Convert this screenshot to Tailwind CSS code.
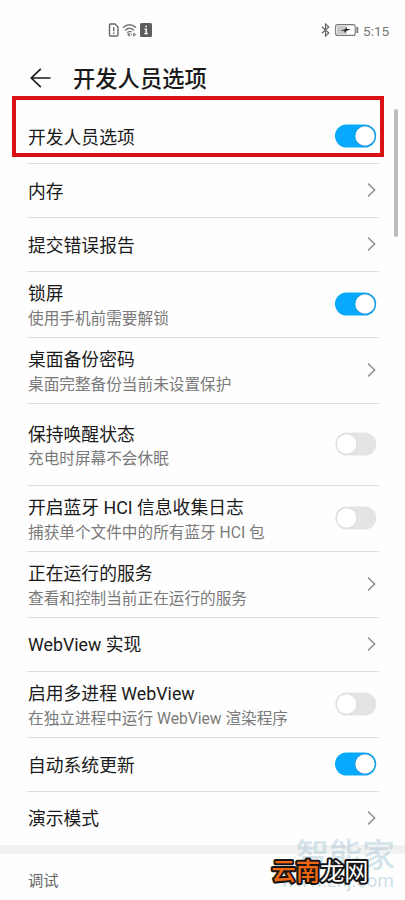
<!DOCTYPE html>
<html lang="zh-CN">
<head>
<meta charset="utf-8">
<title>开发人员选项</title>
<script src="https://cdn.jsdelivr.net/npm/@tailwindcss/browser@4"></script>
</head>
<body class="bg-[#fefefe] font-['Roboto','Noto_Sans_CJK_SC',sans-serif] text-[#1a1a1a]">
<svg class="hidden">
  <symbol id="chev" viewBox="0 0 9 16"><path d="M1 1.5 7.6 8 1 14.5" fill="none" stroke="#8c8c8c" stroke-width="1.5"/></symbol>
  <symbol id="on" viewBox="0 0 42 24"><rect x="0" y="0.5" width="41.2" height="23" rx="11.5" fill="#06a9fb"/><circle cx="30" cy="12" r="10.4" fill="#2b8fca"/><circle cx="30" cy="12" r="9.7" fill="#fff"/></symbol>
  <symbol id="off" viewBox="0 0 42 24"><rect x="0.3" y="0.5" width="41" height="23" rx="11.5" fill="#e4e4e4"/><circle cx="11.6" cy="12" r="10.5" fill="#dadada"/><circle cx="11.6" cy="12" r="9.8" fill="#fff"/></symbol>
</svg>
<div class="relative w-[405px] h-[900px] overflow-hidden flex flex-col">
  <header class="h-[60px] shrink-0 flex items-center justify-between pl-[108px] pr-[15px] text-[#777]">
    <div class="flex items-center gap-[3px]">
      <svg class="w-[11px] h-[14px]" viewBox="0 0 11 14" fill="none" stroke="#666" stroke-width="1.4"><path d="M1.5 2.2Q1.5 1 2.7 1H7L10 4v7.8Q10 13 8.8 13H2.7Q1.5 13 1.5 11.8Z"/><path d="M5.7 4.2v4M5.7 9.6v1.4"/></svg>
      <svg class="w-[15px] h-[14px]" viewBox="0 0 15 14" fill="none" stroke="#777" stroke-width="1.4"><path d="M.8 4.8Q7.5-1.5 14.2 4.8M3 7.4Q7.5 3.1 12 7.4M5.2 9.7Q7.5 7.5 9.5 9"/><path d="M7.8 10.2 6.2 11.6 7.8 13M8.8 11.6H9.8M11.3 10.2 12.9 11.6 11.3 13" stroke-width="1.5"/></svg>
      <svg class="w-[12px] h-[14px]" viewBox="0 0 12 14"><rect width="12" height="14" rx="1.5" fill="#5e5e5e"/><path d="M5.4 2.7h1.6v1.5H5.4zM4.5 5.6h2.4v4.5h1v1.1H4.3v-1.1h1.1V6.7h-.9z" fill="#fff"/></svg>
    </div>
    <div class="flex items-center">
      <svg class="w-[9px] h-[14px]" viewBox="0 0 9 14" fill="none" stroke="#666" stroke-width="1.2"><path d="M.8 3.8 7.8 10 4.5 13V1L7.8 4 .8 10.2"/></svg>
      <svg class="w-[24px] h-[12px] ml-[5px] mr-[4px]" viewBox="0 0 24 12"><rect x=".6" y=".6" width="19.6" height="10.8" rx="2" fill="#fff" stroke="#777" stroke-width="1.1"/><rect x="2" y="2" width="9.5" height="8" fill="#c9c9c9"/><path d="M5 6.8 10.5 5 11.2 2.8 12.3 5H16L11 7.2 10.2 9.2 9 6.8Z" fill="#333"/><path d="M22.3 3v6" stroke="#777" stroke-width="1.8"/></svg>
      <span class="text-[13.6px] leading-[16px] pt-px w-[27px] whitespace-nowrap">5:15</span>
    </div>
  </header>
  <div class="h-[50px] shrink-0 flex items-start pl-[30px]">
    <svg class="w-[21px] h-[20px] mt-[8px]" viewBox="0 0 21 20" fill="none" stroke="#1c1c1c" stroke-width="1.7"><path d="M20.5 10H1.3M10.8.8 1.3 10l9.5 9.2"/></svg>
    <h1 class="ml-[22px] mt-[2px] text-[22.3px] leading-[34px] font-medium">开发人员选项</h1>
  </div>
  <main class="ml-[27px] w-[352px] shrink-0 text-[17.8px] leading-[24px]">
    <div class="h-[54px] border-b border-[#dedede] pl-px pr-[2px] flex items-center justify-between"><span class="pt-[2px]">开发人员选项</span><svg class="w-[42px] h-[24px] mb-px"><use href="#on"/></svg></div>
    <div class="h-[54px] border-b border-[#dedede] pl-px pr-[3px] flex items-center justify-between"><span class="pt-[2px]">内存</span><svg class="w-[9px] h-[16px] mb-px"><use href="#chev"/></svg></div>
    <div class="h-[54px] border-b border-[#dedede] pl-px pr-[3px] flex items-center justify-between"><span class="pt-[2px]">提交错误报告</span><svg class="w-[9px] h-[16px] mb-px"><use href="#chev"/></svg></div>
    <div class="h-[66px] border-b border-[#dedede] pl-px pr-[2px] flex items-center justify-between"><div class="pt-[4px]"><div>锁屏</div><div class="text-[15.65px] leading-[25px] text-[#7a7a7a]">使用手机前需要解锁</div></div><svg class="w-[42px] h-[24px] mb-px"><use href="#on"/></svg></div>
    <div class="h-[66px] border-b border-[#dedede] pl-px pr-[3px] flex items-center justify-between"><div class="pt-[4px]"><div>桌面备份密码</div><div class="text-[15.65px] leading-[25px] text-[#7a7a7a]">桌面完整备份当前未设置保护</div></div><svg class="w-[9px] h-[16px] mb-px"><use href="#chev"/></svg></div>
    <div class="h-[82px] border-b border-[#dedede] pl-px pr-[2px] flex items-center justify-between"><div class="pt-[4px]"><div>保持唤醒状态</div><div class="text-[15.65px] leading-[23px] text-[#7a7a7a]">充电时屏幕不会休眠</div></div><svg class="w-[42px] h-[24px] mb-px"><use href="#off"/></svg></div>
    <div class="h-[66px] border-b border-[#dedede] pl-px pr-[2px] flex items-center justify-between"><div class="pt-[4px]"><div>开启蓝牙 HCI 信息收集日志</div><div class="text-[15.65px] leading-[25px] text-[#7a7a7a]">捕获单个文件中的所有蓝牙 HCI 包</div></div><svg class="w-[42px] h-[24px] mb-px"><use href="#off"/></svg></div>
    <div class="h-[66px] border-b border-[#dedede] pl-px pr-[3px] flex items-center justify-between"><div class="pt-[4px]"><div>正在运行的服务</div><div class="text-[15.65px] leading-[25px] text-[#7a7a7a]">查看和控制当前正在运行的服务</div></div><svg class="w-[9px] h-[16px] mb-px"><use href="#chev"/></svg></div>
    <div class="h-[54px] border-b border-[#dedede] pl-px pr-[3px] flex items-center justify-between"><span class="pt-px">WebView 实现</span><svg class="w-[9px] h-[16px] mb-px"><use href="#chev"/></svg></div>
    <div class="h-[66px] border-b border-[#dedede] pl-px pr-[2px] flex items-center justify-between"><div class="pt-[4px]"><div>启用多进程 WebView</div><div class="text-[15.65px] leading-[25px] text-[#7a7a7a]">在独立进程中运行 WebView 渲染程序</div></div><svg class="w-[42px] h-[24px] mb-px"><use href="#off"/></svg></div>
    <div class="h-[54px] border-b border-[#dedede] pl-px pr-[2px] flex items-center justify-between"><span class="pt-[2px]">自动系统更新</span><svg class="w-[42px] h-[24px] mb-px"><use href="#on"/></svg></div>
    <div class="h-[53px] pl-px pr-[3px] flex items-center justify-between"><span class="pt-px">演示模式</span><svg class="w-[9px] h-[16px] mb-px"><use href="#chev"/></svg></div>
  </main>
  <div class="h-[9px] shrink-0 bg-[#f1f1f1]"></div>
  <section class="h-[46px] shrink-0 pl-[28px] pt-[15px] text-[15.3px] leading-[24px] text-[#666]">调试</section>

  <div class="absolute left-[12px] top-[96px] w-[372px] h-[61px] border-4 border-[#dc1114]"></div>
  <div class="absolute left-[394px] top-[109px] w-[4px] h-[128px] rounded-full bg-[#bcbcbc]"></div>
  <div class="absolute left-[296px] top-[836px] text-[33px] leading-[40px] font-medium text-[#a0c3d2]/45 whitespace-nowrap">智能家</div>
  <div class="absolute right-[11px] top-[870px] text-[19px] leading-[22px] text-[#a0c3d2]/50 whitespace-nowrap">www.znj.com</div>
  <svg class="absolute left-[266px] top-[852px] w-[110px] h-[40px] overflow-visible font-['Noto_Sans_CJK_SC',sans-serif] font-medium" font-size="24.3" stroke="#151515" stroke-width="4" stroke-linejoin="round" paint-order="stroke">
    <text x="5.5" y="28" fill="#f26711">云南</text><text x="54" y="28" fill="#fff" font-weight="400">龙网</text>
  </svg>
</div>
</body>
</html>
